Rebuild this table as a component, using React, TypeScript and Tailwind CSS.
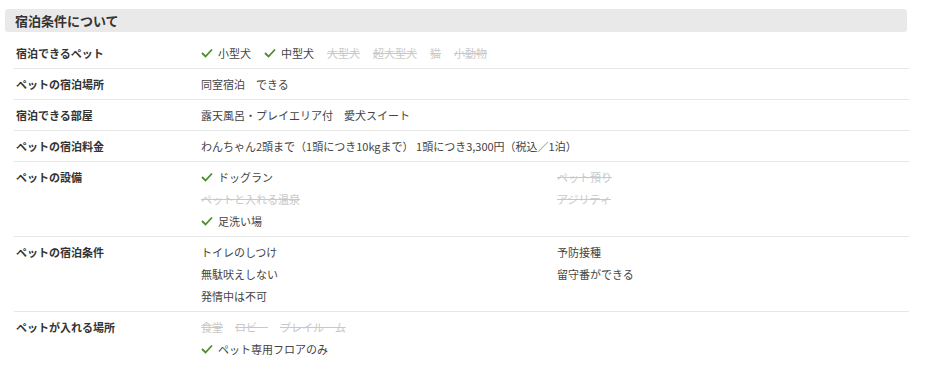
const font = { fontFamily: '"Noto Sans CJK JP", "Noto Sans", sans-serif' };

type Item = { label: string; ok: boolean | null };

function Check() {
  return (
    <svg width="12" height="10" viewBox="0 0 12 10" className="mr-[5px] shrink-0">
      <polyline points="1,5 4.5,8.5 11,1.5" fill="none" stroke="#4b8c2c" strokeWidth="1.8" />
    </svg>
  );
}

function Tag({ item }: { item: Item }) {
  if (item.ok === false) {
    return <span className="text-[#c8c8c8] line-through decoration-[#c8c8c8]">{item.label}</span>;
  }
  return (
    <span className="inline-flex items-center text-[#444]">
      {item.ok && <Check />}
      {item.label}
    </span>
  );
}

const rows: { title: string; kind: "inline" | "grid"; items: Item[] }[] = [
  {
    title: "宿泊できるペット",
    kind: "inline",
    items: [
      { label: "小型犬", ok: true },
      { label: "中型犬", ok: true },
      { label: "大型犬", ok: false },
      { label: "超大型犬", ok: false },
      { label: "猫", ok: false },
      { label: "小動物", ok: false },
    ],
  },
  { title: "ペットの宿泊場所", kind: "inline", items: [{ label: "同室宿泊　できる", ok: null }] },
  { title: "宿泊できる部屋", kind: "inline", items: [{ label: "露天風呂・プレイエリア付　愛犬スイート", ok: null }] },
  {
    title: "ペットの宿泊料金",
    kind: "inline",
    items: [{ label: "わんちゃん2頭まで（1頭につき10kgまで） 1頭につき3,300円（税込／1泊）", ok: null }],
  },
  {
    title: "ペットの設備",
    kind: "grid",
    items: [
      { label: "ドッグラン", ok: true },
      { label: "ペット預り", ok: false },
      { label: "ペットと入れる温泉", ok: false },
      { label: "アジリティ", ok: false },
      { label: "足洗い場", ok: true },
    ],
  },
  {
    title: "ペットの宿泊条件",
    kind: "grid",
    items: [
      { label: "トイレのしつけ", ok: null },
      { label: "予防接種", ok: null },
      { label: "無駄吠えしない", ok: null },
      { label: "留守番ができる", ok: null },
      { label: "発情中は不可", ok: null },
    ],
  },
];

export default function App() {
  return (
    <div className="w-[930px] h-[368px] bg-white overflow-hidden pt-[9px] pl-[5px] pr-[23px]" style={font}>
      {/* Header */}
      <div className="h-[23px] bg-[#e9e9e9] rounded-[3px] pl-[10px] flex items-center">
        <h2 className="text-[13px] font-bold text-[#333] leading-none">宿泊条件について</h2>
      </div>

      <div className="mt-[6px] ml-[9px] mr-[-2px]">
        {rows.map((r) => (
          <div key={r.title} className="flex border-b border-[#e6e6e6] py-[4px] text-[11px] leading-[22px]">
            <div className="w-[187px] shrink-0 pl-[2px] font-bold text-[#333]">{r.title}</div>
            {r.kind === "inline" ? (
              <div className="flex gap-x-[13px]">
                {r.items.map((it) => (
                  <Tag key={it.label} item={it} />
                ))}
              </div>
            ) : (
              <div className="grid grid-cols-[356px_1fr] flex-1">
                {r.items.map((it) => (
                  <div key={it.label}>
                    <Tag item={it} />
                  </div>
                ))}
              </div>
            )}
          </div>
        ))}

        {/* Last row */}
        <div className="flex py-[4px] text-[11px] leading-[22px]">
          <div className="w-[187px] shrink-0 pl-[2px] font-bold text-[#333]">ペットが入れる場所</div>
          <div className="flex flex-col">
            <div className="flex gap-x-[12px]">
              <Tag item={{ label: "食堂", ok: false }} />
              <Tag item={{ label: "ロビー", ok: false }} />
              <Tag item={{ label: "プレイルーム", ok: false }} />
            </div>
            <div>
              <Tag item={{ label: "ペット専用フロアのみ", ok: true }} />
            </div>
          </div>
        </div>
      </div>
    </div>
  );
}
